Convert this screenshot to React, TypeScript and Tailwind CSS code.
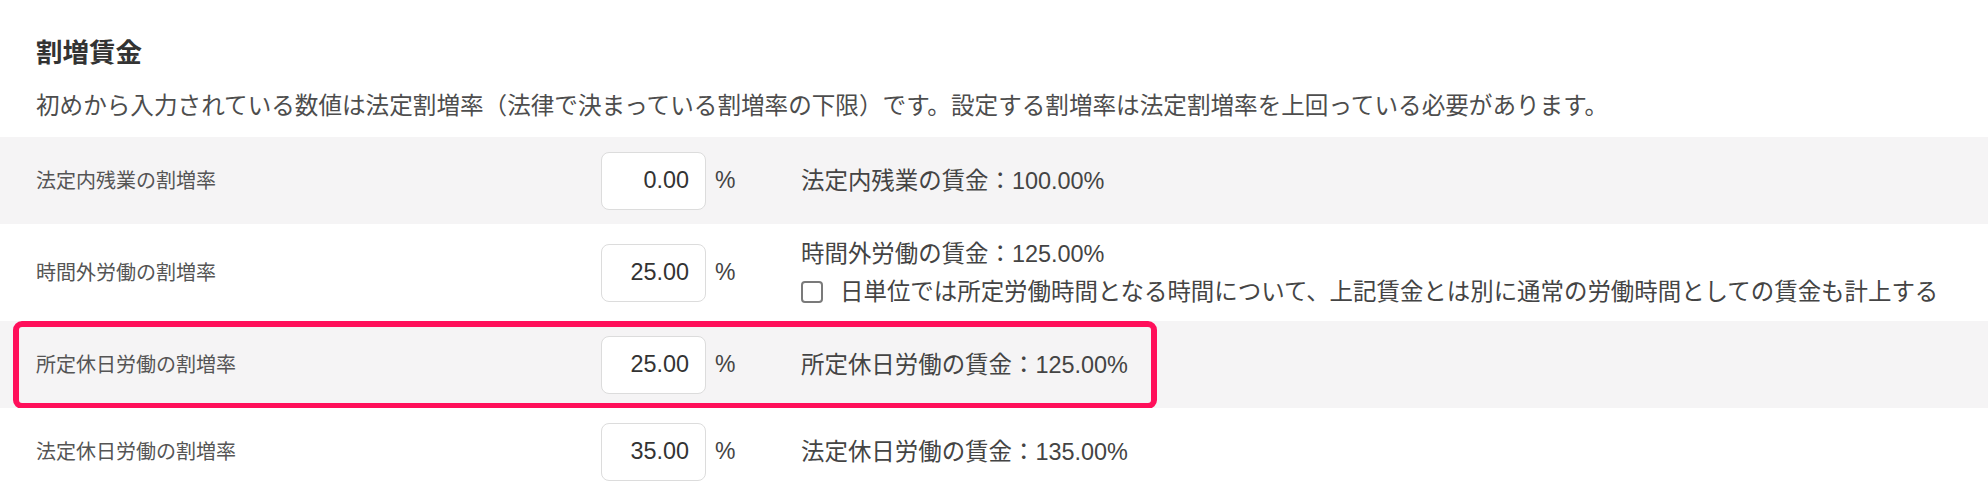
import { useState } from "react";

interface RateRow {
  label: string;
  rate: string;
  wageLabel: string;
  wage: string;
  striped: boolean;
  tall?: boolean;
  highlight?: boolean;
}

const rows: RateRow[] = [
  { label: "法定内残業の割増率", rate: "0.00", wageLabel: "法定内残業の賃金", wage: "100.00%", striped: true },
  { label: "時間外労働の割増率", rate: "25.00", wageLabel: "時間外労働の賃金", wage: "125.00%", striped: false, tall: true },
  { label: "所定休日労働の割増率", rate: "25.00", wageLabel: "所定休日労働の賃金", wage: "125.00%", striped: true, highlight: true },
  { label: "法定休日労働の割増率", rate: "35.00", wageLabel: "法定休日労働の賃金", wage: "135.00%", striped: false },
];

const App = () => {
  const [countRegular, setCountRegular] = useState(false);

  return (
    <div className="w-full min-h-screen bg-white text-[#444] font-['Liberation_Sans','Noto_Sans_CJK_JP',sans-serif]">
      <div className="pl-[36px] pt-[33px] pb-[13px]">
        <h2 className="text-[26.5px] leading-[40px] font-bold text-[#333]">割増賃金</h2>
        <p className="mt-[16px] text-[23.6px] leading-[35px] text-[#4d4d4d]">
          初めから入力されている数値は法定割増率（法律で決まっている割増率の下限）です。設定する割増率は法定割増率を上回っている必要があります。
        </p>
      </div>

      {rows.map((row) => (
        <div
          key={row.label}
          className={`relative flex items-center pl-[36px] ${row.tall ? "h-[97px]" : "h-[87px]"} ${
            row.striped ? "bg-[#f5f4f5]" : "bg-white"
          }`}
        >
          <div className="w-[565px] text-[20px] text-[#555]">{row.label}</div>
          <input
            type="text"
            defaultValue={row.rate}
            className="w-[105px] h-[58px] rounded-[8px] border border-[#dcdcdc] bg-white pr-[16px] text-right text-[23.4px] text-[#333] outline-none"
          />
          <span className="ml-[9px] w-[86px] text-[23px] text-[#444]">%</span>
          <div className="text-[23.45px] leading-[38px] text-[#444]">
            <div>
              {row.wageLabel}：{row.wage}
            </div>
            {row.tall && (
              <label className="flex items-center gap-[17px] cursor-pointer">
                <input
                  type="checkbox"
                  checked={countRegular}
                  onChange={(e) => setCountRegular(e.target.checked)}
                  className="appearance-none w-[22px] h-[22px] rounded-[4px] border-2 border-[#7a7a7a] bg-white checked:bg-[#444]"
                />
                <span>日単位では所定労働時間となる時間について、上記賃金とは別に通常の労働時間としての賃金も計上する</span>
              </label>
            )}
          </div>
          {row.highlight && (
            <div className="pointer-events-none absolute left-[13px] top-0 -bottom-px w-[1144px] rounded-[9px] border-[6px] border-[#ff0f5a]" />
          )}
        </div>
      ))}
    </div>
  );
};

export default App;
